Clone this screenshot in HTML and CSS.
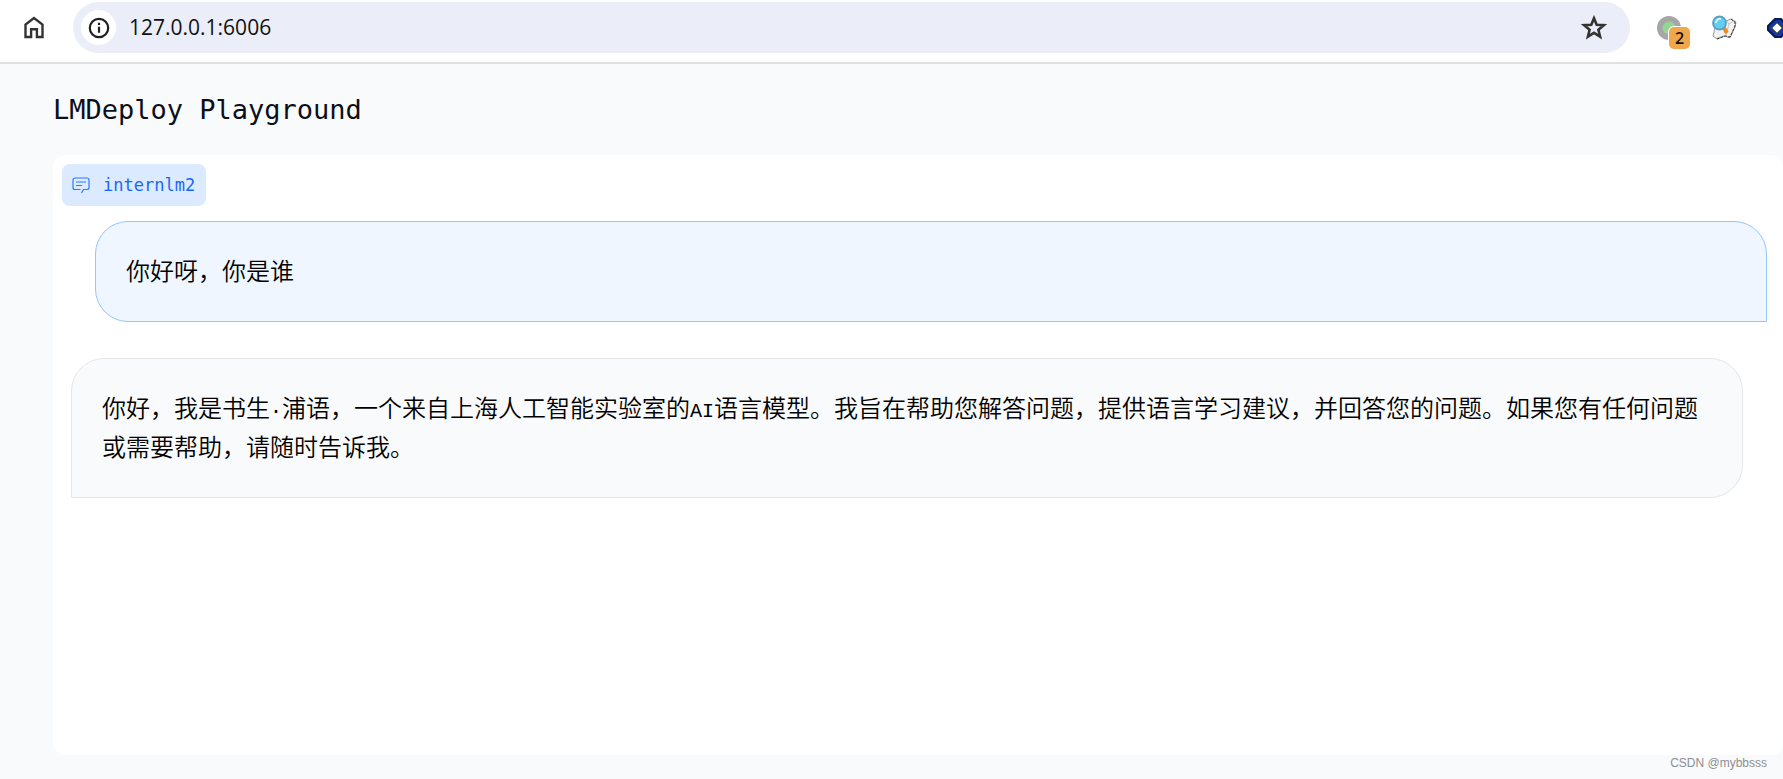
FILE: index.html
```html
<!DOCTYPE html>
<html lang="zh-CN">
<head>
<meta charset="utf-8">
<title>LMDeploy Playground</title>
<link rel="stylesheet" href="styles.css">
</head>
<body>
<header class="toolbar">
  <button class="icon-button" type="button" aria-label="Home">
    <svg width="24" height="24" viewBox="0 0 24 24" fill="none" stroke="#333" stroke-width="2.400"><path d="M3.500 21V8.500L12 2l8.500 6.500V21h-5.600v-7.700H9.100V21z"/></svg>
  </button>
  <div class="address">
    <button class="site-info" type="button" aria-label="Site information">
      <svg width="22" height="22" viewBox="0 0 22 22" fill="none" stroke="#1f1f1f" stroke-width="2.200"><circle cx="11" cy="11" r="9.200"/><path d="M11 9.800v6M11 5.800v2.200"/></svg>
    </button>
    <input class="url" type="text" aria-label="Address" value="127.0.0.1:6006">
    <button class="icon-button" type="button" aria-label="Bookmark">
      <svg width="26" height="26" viewBox="0 0 26 26" fill="none" stroke="#333" stroke-width="2.600"><path d="M13 3.200l2.700 6.500 7.100.5-5.400 4.500 1.700 6.900-6.100-3.800-6.100 3.800 1.700-6.900-5.400-4.500 7.100-.5z"/></svg>
    </button>
  </div>
  <div class="extensions">
    <button class="icon-button extension" type="button" aria-label="Extension, 2 notifications">
      <svg width="24" height="24" viewBox="0 0 24 24"><circle cx="12" cy="12" r="12" fill="#a6a6a6"/><circle cx="12" cy="12" r="6.500" fill="#94d694"/></svg>
      <span class="count">2</span>
    </button>
    <button class="icon-button" type="button" aria-label="Search extension">
      <svg width="26" height="26" viewBox="0 0 26 26"><path d="M4 13l-2 8 4 3 8-3 5 2 5-11 1-5-5-3-5 2-4-3z" fill="#f2f2f2" stroke="#999"/><path d="M15 5l3 4-3 11-9 3M18 9l5-3" fill="none" stroke="#c4c4c4"/><path d="M20 4l4 3v4l-5 11-5-1-8 3" fill="none" stroke="#333" stroke-dasharray="3 1"/><path d="M13 13l3 5" stroke="#f08a18" stroke-width="4"/><circle cx="8.500" cy="8" r="6.500" fill="#62cdf5" stroke="#5b9fc0" stroke-width="1.800"/><path d="M5 8a4 4 0 0 1 5-4" fill="none" stroke="#d4f5ff" stroke-width="2"/></svg>
    </button>
    <button class="icon-button" type="button" aria-label="Blue extension">
      <svg width="24" height="24" viewBox="0 0 24 24"><path d="M8 3h6l7 7v4l-7 7H8l-7-7v-4z" fill="#123a9c" stroke="#071b52" stroke-width="2" stroke-linejoin="round"/><path d="M10 7l5 5-5 5-5-5z" fill="#fff" stroke="#7a7048"/></svg>
    </button>
  </div>
</header>
<main class="page">
  <h1 class="title">LMDeploy Playground</h1>
  <section class="card" aria-label="internlm2">
    <div class="label">
      <svg width="18" height="18" viewBox="0 0 18 18" fill="none" stroke="#2b7bff" stroke-width="1.200"><path d="M9.500 17l2-3.500h3.500a2 2 0 0 0 2-2V4a2 2 0 0 0-2-2H3a2 2 0 0 0-2 2v7.500a2 2 0 0 0 2 2H8.500"/><path d="M4 6h10M4 9.500h6"/></svg>
      <span>internlm2</span>
    </div>
    <div class="messages">
      <p class="message user">你好呀，你是谁</p>
      <p class="message bot">你好，我是书生<span class="latin">·</span>浦语，一个来自上海人工智能实验室的<span class="latin">AI</span>语言模型。我旨在帮助您解答问题，提供语言学习建议，并回答您的问题。如果您有任何问题或需要帮助，请随时告诉我。</p>
    </div>
  </section>
  <footer class="credit">CSDN @mybbsss</footer>
</main>
</body>
</html>
```
FILE: styles.css
```css
* { box-sizing: border-box; }
body {
  margin: 0;
  min-height: 100vh;
  display: flex;
  flex-direction: column;
  overflow-x: hidden;
  background: #f9fafb;
  color: #0b0f19;
  font-family: "DejaVu Sans Mono", "Noto Sans CJK SC", monospace;
}
button { border: 0; padding: 0; background: none; }
svg { display: block; flex: none; }
.toolbar {
  display: flex;
  align-items: center;
  height: 64px;
  padding: 2px 0 9px 22px;
  background: #fff;
  border-bottom: 2px solid #dfe0e2;
  overflow: hidden;
}
.icon-button { display: flex; flex: none; }
.address {
  display: flex;
  flex: 1;
  align-items: center;
  height: 51px;
  margin-left: 27px;
  padding: 0 23px 0 8px;
  border-radius: 26px;
  background: #ebeef8;
}
.site-info {
  display: flex;
  flex: none;
  align-items: center;
  justify-content: center;
  width: 35px;
  height: 35px;
  border-radius: 50%;
  background: #fff;
}
.url {
  flex: 1;
  min-width: 0;
  margin-left: 13px;
  padding: 0 0 2px;
  border: 0;
  outline: 0;
  background: none;
  color: #111;
  font: 21px/32px "Open Sans", sans-serif;
}
.extensions { display: flex; align-items: center; gap: 30px; width: 153px; padding-left: 27px; }
.extension { position: relative; }
.count {
  position: absolute;
  left: 12px;
  top: 11px;
  width: 21px;
  height: 22px;
  border-radius: 5px;
  background: #f0a64b;
  box-shadow: 0 0 0 1px #fff;
  color: #111;
  font: 600 16px/22px "Open Sans", sans-serif;
  text-align: center;
}
.page { display: flex; flex: 1; flex-direction: column; padding-left: 53px; }
.title { margin: 22px 0 21px; font-size: 27px; line-height: 48px; font-weight: 400; }
.card { flex: 1; padding: 9px; border-radius: 12px; background: #fff; }
.label {
  display: flex;
  align-items: center;
  gap: 13px;
  width: fit-content;
  height: 42px;
  padding: 0 11px 0 10px;
  border-radius: 8px;
  background: #dbeafe;
  color: #1868f5;
  font-size: 17px;
  line-height: 30px;
}
.messages { display: flex; flex-direction: column; gap: 36px; padding: 15px 7px 0 9px; }
.message {
  margin: 0;
  padding: 28px 30px 32px;
  border: 1px solid;
  border-radius: 33px;
  color: #000;
  font-family: "Noto Sans CJK SC", sans-serif;
  font-size: 24px;
  line-height: 39px;
  font-weight: 350;
}
.latin { font-family: "Liberation Mono", monospace; font-size: 20px; line-height: 1; }
.user { margin-left: 24px; border-color: #93c5fd; border-bottom-right-radius: 0; background: #eff6ff; }
.bot { margin-right: 24px; border-color: #e5e7eb; border-bottom-left-radius: 0; background: #f9fafb; }
.credit {
  height: 24px;
  padding-right: 16px;
  color: #8c8f93;
  font: 12px/16px "Liberation Sans", sans-serif;
  text-align: right;
}
```
